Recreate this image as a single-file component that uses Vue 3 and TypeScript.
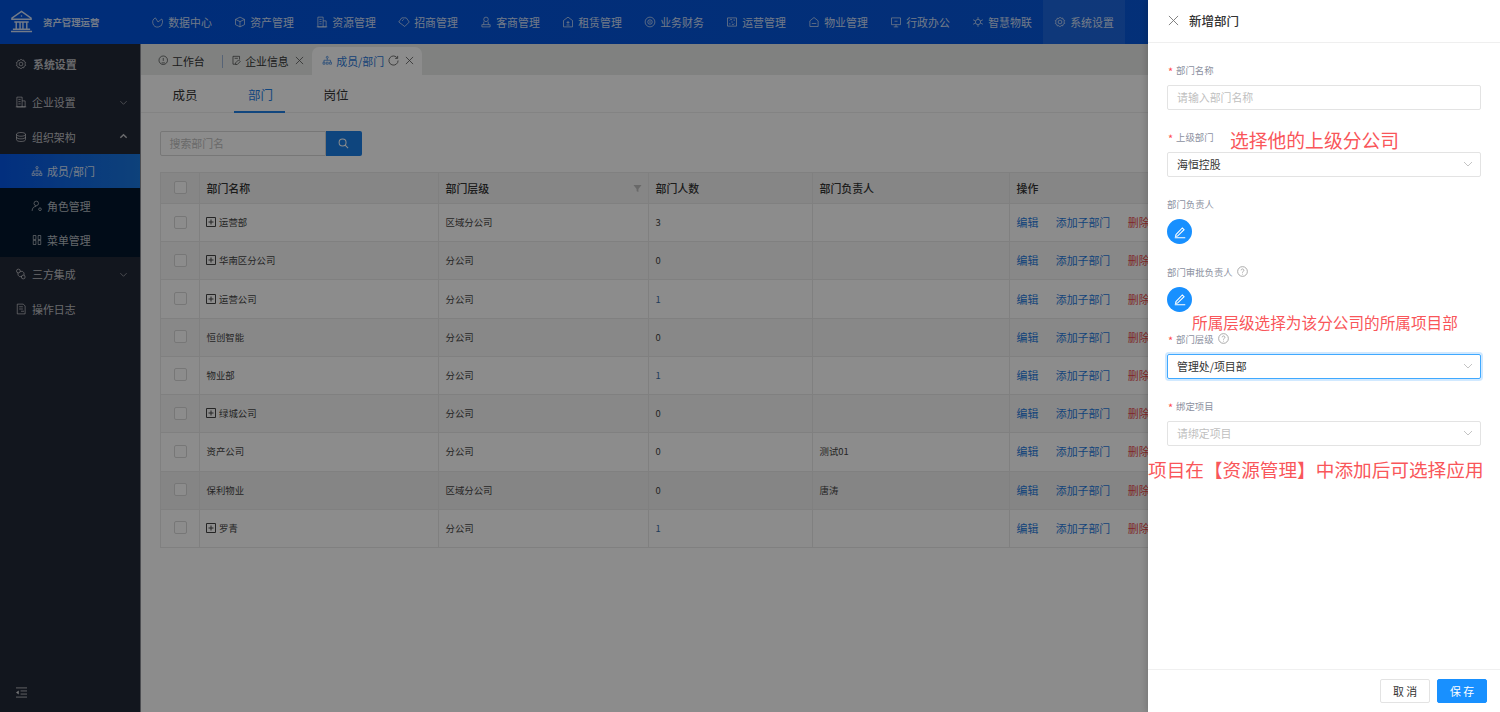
<template>
  <div class="page">
    <header class="topbar">
      <div class="logo">
        <svg class="logo-icon" viewBox="0 0 24 24" fill="none" stroke="currentColor" stroke-width="1.5">
          <path d="M2 8.500 12 1.500l10 7v1.200H2zM4.500 12.500h15M6.500 12.500v7M10.500 12.500v7M13.500 12.500v7M17.500 12.500v7M1 22.500h22M3 20h18" />
          <circle cx="12" cy="6.200" r=".8" fill="currentColor" stroke="none" />
        </svg>
        <span>资产管理运营</span>
      </div>
      <nav class="topnav">
        <a v-for="item in navItems" :key="item.label" class="nav-item" :class="{ active: item.active }">
          <svg class="icon" viewBox="0 0 16 16"><path :d="icons[item.icon]" /></svg>
          <span>{{ item.label }}</span>
        </a>
      </nav>
    </header>

    <div class="body">
      <aside class="sidebar">
        <div class="side-title">
          <svg class="icon" viewBox="0 0 16 16"><path :d="icons.gear" /></svg>
          <span>系统设置</span>
        </div>
        <div class="side-row">
          <svg class="icon" viewBox="0 0 16 16"><path :d="icons.building" /></svg>
          <span>企业设置</span>
          <svg class="caret" viewBox="0 0 10 10"><path d="M1.500 3.500 5 7l3.500-3.500" /></svg>
        </div>
        <div class="side-row open">
          <svg class="icon" viewBox="0 0 16 16"><path :d="icons.stack" /></svg>
          <span>组织架构</span>
          <svg class="caret" viewBox="0 0 10 10"><path d="M1.500 6.500 5 3l3.500 3.500" /></svg>
        </div>
        <div class="submenu">
          <div class="sub-row current">
            <svg class="icon" viewBox="0 0 16 16"><path :d="icons.org" /></svg>
            <span>成员/部门</span>
          </div>
          <div class="sub-row">
            <svg class="icon" viewBox="0 0 16 16"><path :d="icons.role" /></svg>
            <span>角色管理</span>
          </div>
          <div class="sub-row">
            <svg class="icon" viewBox="0 0 16 16"><path :d="icons.grid" /></svg>
            <span>菜单管理</span>
          </div>
        </div>
        <div class="side-row">
          <svg class="icon" viewBox="0 0 16 16"><path :d="icons.link" /></svg>
          <span>三方集成</span>
          <svg class="caret" viewBox="0 0 10 10"><path d="M1.500 3.500 5 7l3.500-3.500" /></svg>
        </div>
        <div class="side-row">
          <svg class="icon" viewBox="0 0 16 16"><path :d="icons.log" /></svg>
          <span>操作日志</span>
        </div>
        <div class="collapse">
          <svg viewBox="0 0 14 12" width="13" height="11"><path d="M1 1h12M6 4.300h7M6 7.700h7M1 11h12" /><path class="fill" d="M1 6l3-2.200v4.400z" /></svg>
        </div>
      </aside>

      <main class="content">
        <div class="tabbar">
          <div class="tab">
            <svg class="icon" viewBox="0 0 16 16"><path :d="icons.gauge" /></svg>
            <span>工作台</span>
          </div>
          <i class="tab-sep"></i>
          <div class="tab">
            <svg class="icon" viewBox="0 0 16 16"><path :d="icons.edit" /></svg>
            <span>企业信息</span>
            <svg class="tab-x" viewBox="0 0 10 10"><path d="M1 1l8 8M9 1 1 9" /></svg>
          </div>
          <div class="tab current">
            <svg class="icon" viewBox="0 0 16 16"><path :d="icons.org" /></svg>
            <span>成员/部门</span>
            <svg class="tab-refresh" viewBox="0 0 12 12"><path d="M10.300 3.500A5 5 0 1 0 11 6M10.500 1v2.700H7.800" /></svg>
            <svg class="tab-x" viewBox="0 0 10 10"><path d="M1 1l8 8M9 1 1 9" /></svg>
          </div>
        </div>

        <div class="subtabs">
          <a>成员</a>
          <a class="current">部门</a>
          <a>岗位</a>
        </div>

        <div class="panel">
          <div class="search">
            <span class="search-input">搜索部门名</span>
            <button class="search-btn">
              <svg viewBox="0 0 12 12" width="11" height="11"><circle cx="5" cy="5" r="3.800" /><path d="M7.800 7.800 11 11" /></svg>
            </button>
          </div>

          <table class="dept-table">
            <colgroup>
              <col style="width: 39px" />
              <col style="width: 239px" />
              <col style="width: 210px" />
              <col style="width: 164px" />
              <col style="width: 197px" />
              <col />
            </colgroup>
            <thead>
              <tr>
                <th class="check-cell"><i class="checkbox"></i></th>
                <th>部门名称</th>
                <th class="filter-cell">
                  部门层级
                  <svg class="filter" viewBox="0 0 10 10"><path d="M.5 1h9L6 5.500V9L4 8V5.500z" /></svg>
                </th>
                <th>部门人数</th>
                <th>部门负责人</th>
                <th>操作</th>
              </tr>
            </thead>
            <tbody>
              <tr v-for="dept in departments" :key="dept.name" :class="{ hovered: dept.name === '保利物业' }">
                <td class="check-cell"><i class="checkbox"></i></td>
                <td>
                  <svg v-if="dept.children" class="expand" viewBox="0 0 10 10"><path d="M.5.500h9v9h-9zM5 2.500v5M2.500 5h5" /></svg>
                  {{ dept.name }}
                </td>
                <td>{{ dept.level }}</td>
                <td :class="{ linked: dept.count === 1 }">{{ dept.count }}</td>
                <td>{{ dept.leader }}</td>
                <td class="ops">
                  <a>编辑</a>
                  <a>添加子部门</a>
                  <a class="danger">删除</a>
                </td>
              </tr>
            </tbody>
          </table>
        </div>
      </main>
    </div>

    <div class="mask"></div>

    <section class="drawer">
      <div class="drawer-head">
        <svg class="drawer-x" viewBox="0 0 12 12"><path d="M1 1l10 10M11 1 1 11" /></svg>
        <span>新增部门</span>
      </div>

      <div class="form">
        <div class="field">
          <label class="required">部门名称</label>
          <div class="control placeholder">请输入部门名称</div>
        </div>
        <div class="field">
          <label class="required">上级部门</label>
          <span class="note note-parent">选择他的上级分公司</span>
          <div class="control">
            海恒控股
            <svg class="arrow" viewBox="0 0 10 10"><path d="M1 3l4 4 4-4" /></svg>
          </div>
        </div>
        <div class="field">
          <label>部门负责人</label>
          <button class="pick">
            <svg viewBox="0 0 12 12" width="14" height="14"><path d="M2.500 8.300 8 2.500l1.500 1.500-5.600 5.500-1.700.2zM1.500 11h9" /></svg>
          </button>
        </div>
        <div class="field">
          <label>部门审批负责人
            <svg class="help" viewBox="0 0 12 12"><circle cx="6" cy="6" r="5.300" /><path d="M4.500 4.700a1.500 1.500 0 1 1 2.300 1.300c-.5.300-.8.600-.8 1.200M6 8.500v.8" /></svg>
          </label>
          <button class="pick">
            <svg viewBox="0 0 12 12" width="14" height="14"><path d="M2.500 8.300 8 2.500l1.500 1.500-5.600 5.500-1.700.2zM1.500 11h9" /></svg>
          </button>
          <span class="note note-level">所属层级选择为该分公司的所属项目部</span>
        </div>
        <div class="field">
          <label class="required">部门层级
            <svg class="help" viewBox="0 0 12 12"><circle cx="6" cy="6" r="5.300" /><path d="M4.500 4.700a1.500 1.500 0 1 1 2.300 1.300c-.5.300-.8.600-.8 1.200M6 8.500v.8" /></svg>
          </label>
          <div class="control focused">
            管理处/项目部
            <svg class="arrow" viewBox="0 0 10 10"><path d="M1 3l4 4 4-4" /></svg>
          </div>
        </div>
        <div class="field">
          <label class="required">绑定项目</label>
          <div class="control placeholder">
            请绑定项目
            <svg class="arrow" viewBox="0 0 10 10"><path d="M1 3l4 4 4-4" /></svg>
          </div>
          <span class="note note-project">项目在【资源管理】中添加后可选择应用</span>
        </div>
      </div>

      <div class="drawer-foot">
        <button class="btn">取 消</button>
        <button class="btn primary">保 存</button>
      </div>
    </section>
  </div>
</template>

<script setup lang="ts">
interface NavItem {
  label: string
  icon: string
  active?: boolean
}

interface Department {
  name: string
  level: string
  count: number
  leader: string
  children: boolean
}

const icons: Record<string, string> = {
  pie: 'M14 8.500A6.500 6.500 0 1 1 4.500 2.500L8 8l5-4a6.500 6.500 0 0 1 1 4.500z',
  cube: 'M8 1.500 14 4.500v7L8 14.500 2 11.500v-7zM2 4.500l6 3 6-3M8 7.500v7',
  building: 'M2.500 14.500v-13h7v13zM9.500 6.500h4v8h-4M4.500 4.500h3M4.500 7.500h3M4.500 10.500h3M1 14.500h14',
  tag: 'M5 2.500h6L15 8l-6 6-8-6zM5.500 6.500l2-2',
  user: 'M8 1.500a3 3 0 1 1 0 6 3 3 0 0 1 0-6zM2.500 14.500v-3h11v3zM5 7.500v4M11 7.500v4',
  house: 'M8 1.500 14 6v8.500H2V6zM8 6.500v4M6 8.500h4M6 12h4',
  coin: 'M8 1.500a6.500 6.500 0 1 1 0 13 6.500 6.500 0 0 1 0-13zM8 5a3 3 0 1 1 0 6 3 3 0 0 1 0-6zM8 6.500v3',
  ops: 'M2 2.500h12v11H2zM5 6a2 2 0 0 1 3-1M11 10a2 2 0 0 1-3 1M10 5.500h2M4 10.500h2M7 8h2',
  home2: 'M8 2 13.500 6.500v7.500h-11V6.500zM5 10h6',
  screen: 'M2 2.500h12v9H2zM8 11.500v3M5 14.500h6M6 7h4',
  chip: 'M8 4.500a3.500 3.500 0 1 1 0 7 3.500 3.500 0 0 1 0-7zM8 1.500v3M8 11.500v3M1.500 5l3 1.500M11.500 9.500l3 1.500M14.500 5l-3 1.500M4.500 9.500l-3 1.500',
  gear: 'M8 1.500l1.500 1.600 2.200-.3.500 2.100 2 1-.9 2 .9 2-2 1-.5 2.100-2.200-.3L8 14.500l-1.500-1.600-2.200.3-.5-2.100-2-1 .9-2-.9-2 2-1 .5-2.100 2.200.3zM8 5.500a2.500 2.500 0 1 1 0 5 2.500 2.500 0 0 1 0-5z',
  stack: 'M8 2c3.500 0 6 1 6 2.500S11.500 7 8 7 2 6 2 4.500 4.500 2 8 2zM2 4.500v7C2 13 4.500 14 8 14s6-1 6-2.500v-7M2 8c0 1.500 2.500 2.500 6 2.500s6-1 6-2.500',
  org: 'M8 2a1.500 1.500 0 1 1 0 3 1.500 1.500 0 0 1 0-3zM8 5v3M3 11V8h10v3M1.500 11h3v3h-3zM6.500 11h3v3h-3zM11.500 11h3v3h-3z',
  role: 'M7 1.500a3 3 0 1 1 0 6 3 3 0 0 1 0-6zM1.500 14.500c0-4 2.500-6 5.500-6M12 10.500a1.800 1.800 0 1 1 0 3.600 1.800 1.800 0 0 1 0-3.600z',
  grid: 'M3 2h3.500v5.500H3zM9.500 2H13v5.500H9.500zM3 8.500h3.500V14H3zM9.500 8.500H13V14H9.500z',
  link: 'M4.500 1.500a2.500 2.500 0 1 1 0 5 2.500 2.500 0 0 1 0-5zM11 9.500a2.500 2.500 0 1 1 0 5 2.500 2.500 0 0 1 0-5zM7 4.500h3l2 2v3M9 11.500H6l-2-2v-3',
  log: 'M3 14.500v-13h8l2.500 2.500v10.500zM5.500 5h5M5.500 8h5M8 11h4',
  gauge: 'M8 1.500a6.500 6.500 0 1 1 0 13 6.500 6.500 0 0 1 0-13zM8 4.500V9M5.500 12h5',
  edit: 'M13 7V2H3v12h4M11.500 7.500l2.500 2.500-4.500 4.500H7v-2.500zM5.500 5h5',
}

const navItems: NavItem[] = [
  { label: '数据中心', icon: 'pie' },
  { label: '资产管理', icon: 'cube' },
  { label: '资源管理', icon: 'building' },
  { label: '招商管理', icon: 'tag' },
  { label: '客商管理', icon: 'user' },
  { label: '租赁管理', icon: 'house' },
  { label: '业务财务', icon: 'coin' },
  { label: '运营管理', icon: 'ops' },
  { label: '物业管理', icon: 'home2' },
  { label: '行政办公', icon: 'screen' },
  { label: '智慧物联', icon: 'chip' },
  { label: '系统设置', icon: 'gear', active: true },
]

const departments: Department[] = [
  { name: '运营部', level: '区域分公司', count: 3, leader: '', children: true },
  { name: '华南区分公司', level: '分公司', count: 0, leader: '', children: true },
  { name: '运营公司', level: '分公司', count: 1, leader: '', children: true },
  { name: '恒创智能', level: '分公司', count: 0, leader: '', children: false },
  { name: '物业部', level: '分公司', count: 1, leader: '', children: false },
  { name: '绿城公司', level: '分公司', count: 0, leader: '', children: true },
  { name: '资产公司', level: '分公司', count: 0, leader: '测试01', children: false },
  { name: '保利物业', level: '区域分公司', count: 0, leader: '唐涛', children: false },
  { name: '罗青', level: '分公司', count: 1, leader: '', children: true },
]
</script>

<style>
html,
body {
  margin: 0;
  overflow: hidden;
}
</style>

<style scoped>
.page {
  position: relative;
  width: 1500px;
  height: 712px;
  overflow: hidden;
  display: flex;
  flex-direction: column;
  font-family: "Noto Sans CJK SC", "Noto Sans", sans-serif;
  font-size: 9.4px;
  color: #333;
  background: #fff;
}

.icon {
  width: 12px;
  height: 12px;
  flex: none;
  fill: none;
  stroke: currentColor;
  stroke-width: 1;
}

/* top bar */
.topbar {
  height: 43.500px;
  flex: none;
  display: flex;
  background: linear-gradient(90deg, #0052dc, #0a5adb);
  color: rgba(255, 255, 255, 0.82);
}

.logo {
  width: 141px;
  flex: none;
  display: flex;
  align-items: center;
  padding-left: 10px;
  gap: 10px;
  box-sizing: border-box;
  font-size: 9.400px;
  font-weight: 700;
}

.logo-icon {
  width: 23px;
  height: 23px;
}

.topnav {
  display: flex;
}

.nav-item {
  width: 82px;
  box-sizing: border-box;
  display: flex;
  align-items: center;
  justify-content: center;
  gap: 4px;
  font-size: 10.900px;
}

.nav-item.active {
  background: rgba(255, 255, 255, 0.09);
}

/* sidebar */
.body {
  flex: 1;
  display: flex;
  min-height: 0;
}

.sidebar {
  width: 140.500px;
  flex: none;
  display: flex;
  flex-direction: column;
  background: #222837;
  color: rgba(255, 255, 255, 0.72);
  font-size: 10.900px;
  border-right: 1px solid #8a8c94;
  box-sizing: border-box;
}

.side-title {
  height: 41.700px;
  flex: none;
  display: flex;
  align-items: center;
  gap: 6px;
  padding-left: 15px;
  font-weight: 700;
}

.side-row {
  height: 34.400px;
  flex: none;
  display: flex;
  align-items: center;
  gap: 5px;
  padding: 0 12px 0 15px;
}

.side-row span {
  flex: 1;
}

.caret {
  width: 9px;
  height: 9px;
  fill: none;
  stroke: currentColor;
  stroke-width: 1;
  opacity: 0.7;
}

.open .caret {
  stroke-width: 1.600;
  opacity: 1;
}

.submenu {
  background: #02162c;
}

.sub-row {
  height: 34.400px;
  display: flex;
  align-items: center;
  gap: 4px;
  padding-left: 31px;
}

.sub-row.current {
  background: linear-gradient(90deg, #0456e6, #1a78e0);
  color: rgba(255, 255, 255, 0.85);
}

.collapse {
  margin-top: auto;
  padding: 0 0 14px 15px;
  line-height: 0;
}

.collapse svg {
  fill: none;
  stroke: rgba(255, 255, 255, 0.7);
  stroke-width: 1;
}

.collapse .fill {
  fill: rgba(255, 255, 255, 0.8);
  stroke: none;
}

/* tabs */
.content {
  flex: 1;
  min-width: 0;
  display: flex;
  flex-direction: column;
  background: #fff;
}

.tabbar {
  height: 31px;
  flex: none;
  display: flex;
  align-items: flex-end;
  padding-left: 17px;
  background: #e9ecea;
  font-size: 10.900px;
  box-sizing: border-box;
}

.tab {
  height: 28px;
  display: flex;
  align-items: center;
  gap: 4px;
}

.tab .icon {
  width: 10.500px;
  height: 10.500px;
}

.tab-sep {
  width: 1px;
  height: 13px;
  margin: 0 8px 7px 17px;
  background: #9db4d8;
}

.tab-x {
  width: 9px;
  height: 9px;
  margin-left: 2px;
  flex: none;
  fill: none;
  stroke: #555;
  stroke-width: 0.900;
}

.tab.current {
  margin-left: 8px;
  width: 110px;
  padding-left: 10px;
  box-sizing: border-box;
  background: #fff;
  border-radius: 7px 7px 0 0;
  color: #2a78d8;
}

.tab.current .tab-refresh {
  width: 11px;
  height: 11px;
  flex: none;
  fill: none;
  stroke: #666;
  stroke-width: 1;
}

.tab.current .tab-x {
  margin-left: 2px;
}

.subtabs {
  height: 38px;
  flex: none;
  display: flex;
  padding-left: 32px;
  gap: 50.500px;
  border-bottom: 1px solid #eee;
  box-sizing: border-box;
  font-size: 12.500px;
  line-height: 40px;
  color: #333;
}

.subtabs a {
  position: relative;
}

.subtabs a.current {
  color: #1f80e6;
}

.subtabs a.current::after {
  content: "";
  position: absolute;
  left: -14px;
  right: -12px;
  bottom: -1px;
  height: 2px;
  background: #1f80e6;
}

/* table area */
.panel {
  padding: 18px 19px 0;
}

.search {
  display: flex;
  margin-bottom: 16px;
}

.search-input {
  width: 166px;
  height: 25px;
  box-sizing: border-box;
  border: 1px solid #d9d9d9;
  border-radius: 2px 0 0 2px;
  padding-left: 9px;
  line-height: 23px;
  font-size: 10.900px;
  color: #bfbfbf;
}

.search-btn {
  width: 36px;
  height: 25px;
  padding: 0;
  border: 0;
  border-radius: 0 2px 2px 0;
  background: #1a7fe6;
  display: flex;
  align-items: center;
  justify-content: center;
}

.search-btn svg {
  fill: none;
  stroke: #fff;
  stroke-width: 1.100;
}

.dept-table {
  width: 1320px;
  border-collapse: collapse;
  table-layout: fixed;
}

.dept-table th,
.dept-table td {
  border: 1px solid #eaeaea;
  padding: 0 0 0 7px;
  text-align: left;
  box-sizing: border-box;
  overflow: hidden;
  white-space: nowrap;
}

.dept-table th {
  height: 31.500px;
  background: #f5f5f5;
  font-size: 10.900px;
  font-weight: 500;
  color: #333;
}

.dept-table td {
  height: 38.220px;
  padding-bottom: 1px;
  color: #444;
}

.dept-table tbody tr:nth-child(even) td {
  background: #f7f7f7;
}

.dept-table tbody tr.hovered td {
  background: #f3f3f3;
}

.dept-table th.check-cell,
.dept-table td.check-cell {
  padding: 0 0 1px 1px;
  text-align: center;
  line-height: 0;
}

.checkbox {
  display: inline-block;
  width: 13px;
  height: 13px;
  box-sizing: border-box;
  border: 1px solid #d9d9d9;
  border-radius: 2px;
  background: #fff;
  vertical-align: middle;
}

.filter-cell {
  position: relative;
}

.filter {
  position: absolute;
  right: 6px;
  top: 11px;
  width: 9px;
  height: 9px;
  fill: #bfbfbf;
}

.expand {
  width: 10px;
  height: 10px;
  margin-left: -0.500px;
  margin-right: 1px;
  vertical-align: -1px;
  fill: none;
  stroke: #444;
  stroke-width: 1;
}

.linked {
  color: #3b6ea5 !important;
}

.ops {
  font-size: 10.900px;
}

.ops a {
  color: #1f7be0;
  margin-right: 17.500px;
}

.ops a.danger {
  color: #e8484a;
}

/* overlay */
.mask {
  position: absolute;
  inset: 0;
  background: rgba(0, 0, 0, 0.45);
}

.drawer {
  position: absolute;
  top: 0;
  right: 0;
  bottom: 0;
  width: 352px;
  display: flex;
  flex-direction: column;
  background: #fff;
  box-shadow: -2px 0 6px rgba(0, 0, 0, 0.15);
}

.drawer-head {
  height: 43px;
  flex: none;
  display: flex;
  align-items: center;
  gap: 10px;
  padding: 0 0 1px 20px;
  box-sizing: border-box;
  border-bottom: 1px solid #efefef;
  font-size: 12.500px;
  font-weight: 500;
  color: #333;
}

.drawer-x {
  width: 11px;
  height: 11px;
  fill: none;
  stroke: #777;
  stroke-width: 1;
}

.form {
  flex: 1;
  padding: 17px 19px 0;
}

.field {
  position: relative;
  height: 67.200px;
}

.field label {
  display: flex;
  align-items: center;
  height: 20px;
  margin-bottom: 5px;
  font-size: 9.400px;
  color: #8b90a0;
}

.field label.required {
  padding-left: 9px;
  position: relative;
}

.field label.required::before {
  content: "*";
  position: absolute;
  left: 1px;
  top: 3px;
  color: #ff4d4f;
  font-size: 11px;
}

.help {
  width: 11px;
  height: 11px;
  margin-left: 4px;
  fill: none;
  stroke: #999;
  stroke-width: 0.900;
}

.control {
  position: relative;
  height: 25px;
  box-sizing: border-box;
  border: 1px solid #e3e3e3;
  border-radius: 2px;
  padding-left: 9px;
  line-height: 23px;
  font-size: 10.900px;
  color: #333;
}

.control.placeholder {
  color: #bfbfbf;
}

.control.focused {
  border-color: #40a9ff;
  box-shadow: 0 0 0 2px rgba(24, 144, 255, 0.2);
}

.arrow {
  position: absolute;
  right: 7px;
  top: 6px;
  width: 10px;
  height: 10px;
  fill: none;
  stroke: #c4c4c4;
  stroke-width: 1;
}

.pick {
  width: 25px;
  height: 25px;
  padding: 0;
  border: 0;
  border-radius: 50%;
  background: #1890ff;
  display: flex;
  align-items: center;
  justify-content: center;
}

.pick svg {
  fill: none;
  stroke: #fff;
  stroke-width: 0.900;
}

.note {
  position: absolute;
  color: #f9565a;
  white-space: nowrap;
  line-height: 1;
}

.note-parent {
  left: 63px;
  top: 4px;
  font-size: 18.800px;
}

.note-level {
  left: 25px;
  top: 53px;
  font-size: 15.650px;
}

.note-project {
  left: -19px;
  top: 64px;
  font-size: 18.650px;
}

.drawer-foot {
  height: 42px;
  flex: none;
  display: flex;
  justify-content: flex-end;
  align-items: center;
  gap: 7px;
  padding-right: 13px;
  border-top: 1px solid #f0f0f0;
}

.btn {
  width: 50px;
  height: 24px;
  padding: 0;
  border: 1px solid #e3e3e3;
  border-radius: 2px;
  background: #fff;
  font-family: inherit;
  font-size: 10.900px;
  color: #333;
}

.btn.primary {
  border-color: #1890ff;
  background: #1890ff;
  color: #fff;
}
</style>
